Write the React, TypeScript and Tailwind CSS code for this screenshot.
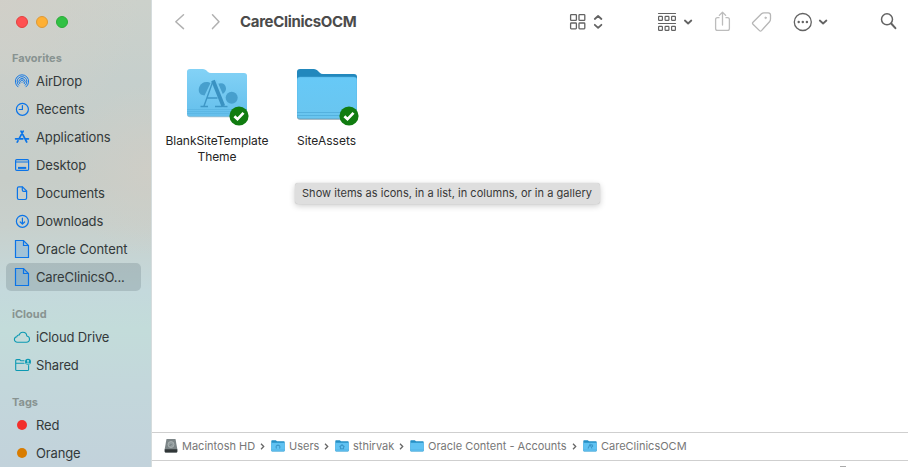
import type { ReactNode } from "react";

const FONT = "font-['Inter','Liberation_Sans',sans-serif]";

function Heading({ children }: { children: ReactNode }) {
  return <h2 className="h-8 pt-[14px] pl-3 text-[11px] leading-[18px] font-bold text-[#889391]">{children}</h2>;
}

function Item({ icon, label, track, active }: { icon: ReactNode; label: string; track: string; active?: boolean }) {
  return (
    <div className={`mr-[10px] ml-1.5 flex h-7 items-center rounded-[5px] ${active ? "bg-[#6c8287]/30" : ""}`}>
      <span className="flex w-8 justify-center">{icon}</span>
      <span className={`-ml-0.5 text-[13px] leading-5 whitespace-nowrap text-[#33393a] ${track}`}>{label}</span>
    </div>
  );
}

const blue = { fill: "none", stroke: "#0b74e8", strokeWidth: 1.2, strokeLinecap: "round", strokeLinejoin: "round" } as const;
const teal = { ...blue, stroke: "#0c99b2", strokeWidth: 1.1 } as const;

function PageIcon() {
  return (
    <svg width="16" height="20" viewBox="0 0 16 20" {...blue} strokeLinecap="butt" strokeLinejoin="miter">
      <path d="M1.500 1.500h8l5 5v12h-13z" fill="#4f9be0" fillOpacity=".3" />
      <path d="M9.500 1.500v5h5" />
    </svg>
  );
}

const airdrop = (
  <svg width="16" height="16" viewBox="0 0 16 16" {...blue} strokeWidth={0.95}>
    <path d="M4 13.900a6.700 6.700 0 1 1 8 0M4.700 12.200a4.900 4.900 0 1 1 6.600 0M5.700 10.700a3.100 3.100 0 1 1 4.600 0" />
    <path d="M6.900 9.300a1.400 1.400 0 1 1 2.200 0" />
  </svg>
);
const recents = (
  <svg width="16" height="16" viewBox="0 0 16 16" {...blue}>
    <circle cx="8.400" cy="8.300" r="6" />
    <path d="M8.400 4.500v4H5.200" />
  </svg>
);
const apps = (
  <svg width="16" height="16" viewBox="0 0 16 16" {...blue} strokeWidth={1.7}>
    <path d="M7 2.200 12.700 13M9.200 2.200 5.400 9.200M4 11.800l-.8 1.300M1.600 9.800h7.200M11.600 9.800h2.800" />
  </svg>
);
const desktop = (
  <svg width="16" height="16" viewBox="0 0 16 16" {...blue}>
    <rect x="1.600" y="2.600" width="13" height="10.800" rx="1.200" />
    <path d="M2 5h12.200" />
    <path d="M4 10.900h8.200" strokeWidth="2" strokeLinecap="butt" />
  </svg>
);
const documents = (
  <svg width="16" height="16" viewBox="0 0 16 16" {...blue}>
    <path d="M4.800 1.800h3.700l4.100 4.200v7.100q0 1.400-1.400 1.400H4.800q-1.400 0-1.400-1.400v-9.900q0-1.400 1.400-1.400z" />
    <path d="M8.300 2v3q0 1.300 1.300 1.300h3" />
  </svg>
);
const downloads = (
  <svg width="16" height="16" viewBox="0 0 16 16" {...blue}>
    <circle cx="8.400" cy="8.300" r="6" />
    <path d="M8.400 5v6M6.200 9l2.200 2.200L10.600 9" />
  </svg>
);
const cloud = (
  <svg width="18" height="16" viewBox="0 0 18 16" {...teal}>
    <path d="M4.400 13.200C2.600 13.200 1.400 12 1.400 10.500c0-1.400 1-2.500 2.400-2.700.2-1.300 1.200-2 2.300-1.700C6.800 4.300 8.100 3.300 9.800 3.300c2.100 0 3.800 1.500 4 3.700 1.600.3 2.700 1.400 2.700 3 0 1.800-1.400 3.200-3.200 3.200z" />
  </svg>
);
const shared = (
  <svg width="18" height="16" viewBox="0 0 18 16" {...teal} className="ml-0.5">
    <path d="M10 3.800H7L5.800 2.600H2.700q-1 0-1 1v8.800q0 1.100 1.100 1.100h10.700q1.100 0 1.100-1.100V8.500M1.700 6.200H10" />
    <circle cx="14" cy="4.800" r="3" fill="#0c99b2" stroke="none" />
    <circle cx="14" cy="3.900" r=".9" fill="#d8eeee" stroke="none" />
    <path d="M12.800 6.300q1.200-1 2.400 0" stroke="#d8eeee" strokeWidth=".9" />
  </svg>
);

function Dot({ color }: { color: string }) {
  return <span className={`size-[10px] rounded-full ${color}`} />;
}

function Check() {
  return (
    <svg width="20" height="20" viewBox="0 0 20 20" className="absolute top-[41px] left-[42px]">
      <circle cx="10" cy="10" r="9.600" fill="#107c10" />
      <path d="m5.400 10.200 3.100 3L14.500 6.900" fill="none" stroke="#fff" strokeWidth="2.700" />
    </svg>
  );
}

function ThemeFolder() {
  return (
    <svg width="60" height="60" viewBox="0 0 60 60" className="block">
      <defs>
        <linearGradient id="tf" x1="0" y1="0" x2="0" y2="1">
          <stop offset="0" stopColor="#83d2f6" />
          <stop offset="1" stopColor="#64bfec" />
        </linearGradient>
      </defs>
      <path d="M0 49.300V8q0-3 3-3h13q2 0 3.500 1.500L21 8q1 1 3 1h33q3 0 3 3v37.300q0 3-3 3H3q-3 0-3-3z" fill="#a9bfca" />
      <path d="M0 48.600V7q0-3 3-3h13q2 0 3.500 1.500L21 7q1 1 3 1h33q3 0 3 3v37.600q0 3-3 3H3q-3 0-3-3z" fill="url(#tf)" />
      <path d="M0 44.500h60M0 46.500h60M0 48.500h60" stroke="#55b0dd" strokeWidth=".6" />
      <g fill="#479fcd">
        <path d="M12 27a8 8 0 0 1 9-10l2.500 1-6 12.500q-4.500-.5-5.500-3.500z" />
        <path d="M31 18.800q7-2 8 4.500 0 4-4 6z" />
        <circle cx="44.700" cy="32.700" r="6" />
      </g>
      <path d="m26.500 16 11.500 26" stroke="#76c9f1" strokeWidth="6.500" />
      <path d="M13.500 41.500h7.500M28 41.500h12.500M17 41 26 16M20.500 33h10" fill="none" stroke="#3f97c6" strokeWidth="1.400" />
      <path d="m26 15.500 10.300 25.500" stroke="#3a92c2" strokeWidth="3.800" />
    </svg>
  );
}

function AssetsFolder() {
  return (
    <svg width="60" height="60" viewBox="0 0 60 60" className="block">
      <defs>
        <linearGradient id="af" x1="0" y1="0" x2="0" y2="1">
          <stop offset="0" stopColor="#67c9f7" />
          <stop offset="1" stopColor="#69c5ef" />
        </linearGradient>
      </defs>
      <path d="M0 51.500V8q0-3 3-3h14q2 0 3.500 1.500l2 2Q24 10 26 10h31q3 0 3 3v38.500q0 3.300-3 3.300H3q-3 0-3-3.300z" fill="#8ba4b1" />
      <path d="M0 40V7q0-3 3-3h14q2 0 3.500 1.500l2 2Q24 9 26 9h31q3 0 3 3v28z" fill="#2288bd" />
      <path d="M0 50.500V15q0-3 3-3h54q3 0 3 3v35.500q0 3-3 3H3q-3 0-3-3z" fill="url(#af)" stroke="#51afdd" strokeWidth=".5" />
      <path d="M0 47.500h60M0 50.500h60" stroke="#4ca8d5" strokeWidth=".7" />
    </svg>
  );
}

function File({ icon, children }: { icon: ReactNode; children: ReactNode }) {
  return (
    <div className="flex w-[110px] flex-col items-center">
      <div className="relative">
        {icon}
        <Check />
      </div>
      <div className="mt-[9px] text-center text-[12px] leading-4 whitespace-nowrap text-[#252525]">{children}</div>
    </div>
  );
}

function MiniFolder({ mark }: { mark?: ReactNode }) {
  return (
    <svg width="14" height="14" viewBox="0 0 14 14" className="shrink-0">
      <path d="M.3 11.500V2q0-.8.8-.8h3.700L6 2.300h6.900q.8 0 .8.800v8.400q0 1-.8 1H1.100q-.8 0-.8-1z" fill="#258fc5" />
      <path d="M.3 3.700h13.400v7.600q0 .9-.8.9H1.100q-.8 0-.8-.9z" fill="#60c2f2" />
      <path d="M.3 11h13.400" stroke="#4dacdc" strokeWidth=".6" />
      {mark}
    </svg>
  );
}

const mini = { fill: "none", stroke: "#3d98ca", strokeWidth: 1.1 } as const;

function Crumb({ icon, label, width, last, track }: { icon: ReactNode; label: string; width: string; last?: boolean; track: string }) {
  return (
    <div className={`flex shrink-0 items-center ${width}`}>
      {icon}
      <span className={`ml-1 text-[11px] leading-4 whitespace-nowrap text-[#777] ${track}`}>{label}</span>
      {!last && (
        <svg width="5" height="8" viewBox="0 0 5 8" className="mr-[6px] ml-auto" fill="none" stroke="#666" strokeWidth="1.300">
          <path d="m1 1.800 2.700 2.700L1 7.200" />
        </svg>
      )}
    </div>
  );
}

const tool = { fill: "none", stroke: "#636363", strokeWidth: 1.3, strokeLinecap: "round", strokeLinejoin: "round" } as const;

export default function App() {
  return (
    <div className={`flex h-[467px] w-[908px] overflow-hidden bg-white ${FONT}`}>
      <aside className="w-[152px] shrink-0 border-r border-[#d5dcdd] bg-[radial-gradient(circle_at_150px_170px,rgba(208,206,198,.8)_0px,rgba(208,206,198,0)_85px),radial-gradient(circle_at_0px_0px,rgba(209,207,200,.9)_0px,rgba(209,207,200,0)_140px),linear-gradient(180deg,#ccd1cb_0px,#c6cfcc_80px,#c7cdc8_180px,#c8d0cc_225px,#c4d9dc_290px,#c3dcda_330px,#c3d7db_385px,#c2d2db_467px)]">
        <div className="flex h-[35px] gap-2 pt-4 pl-4">
          <span className="size-3 rounded-full border border-[#e2413f] bg-[#ff5152]" />
          <span className="size-3 rounded-full border border-[#dd9937] bg-[#ffb035]" />
          <span className="size-3 rounded-full border border-[#2bab38] bg-[#31c144]" />
        </div>
        <Heading>Favorites</Heading>
        <Item icon={airdrop} label="AirDrop" track="tracking-[-0.15px]" />
        <Item icon={recents} label="Recents" track="tracking-[-0.1px]" />
        <Item icon={apps} label="Applications" track="tracking-[-0.1px]" />
        <Item icon={desktop} label="Desktop" track="tracking-[-0.12px]" />
        <Item icon={documents} label="Documents" track="tracking-[-0.12px]" />
        <Item icon={downloads} label="Downloads" track="tracking-[-0.15px]" />
        <Item icon={<PageIcon />} label="Oracle Content" track="tracking-[-0.08px]" />
        <Item icon={<PageIcon />} label="CareClinicsO..." track="tracking-[-0.13px]" active />
        <Heading>iCloud</Heading>
        <Item icon={cloud} label="iCloud Drive" track="tracking-[-0.16px]" />
        <Item icon={shared} label="Shared" track="tracking-[-0.15px]" />
        <Heading>Tags</Heading>
        <Item icon={<Dot color="bg-[#f22f2c]" />} label="Red" track="tracking-[-0.15px]" />
        <Item icon={<Dot color="bg-[#d97c00]" />} label="Orange" track="tracking-[-0.15px]" />
      </aside>

      <main className="flex min-w-0 flex-1 flex-col">
        <header className="flex h-11 shrink-0 items-center pl-[21px]">
          <svg width="14" height="20" viewBox="173 12 14 20" {...tool} stroke="#b1b1b1" strokeWidth={1.5}><path d="m183.500 14.800-7.700 6.900 7.700 6.900" /></svg>
          <svg width="14" height="20" viewBox="209 12 14 20" {...tool} stroke="#b1b1b1" strokeWidth={1.5} className="ml-[22px]"><path d="m212.500 14.800 6.500 6.900-6.500 6.900" /></svg>
          <h1 className="ml-[17px] w-[328px] text-[15px] leading-5 font-bold tracking-[-0.33px] text-[#4b4b4b]">CareClinicsOCM</h1>
          <svg width="20" height="20" viewBox="568 12 20 20" {...tool}>
            <rect x="570.600" y="14.600" width="5.800" height="5.800" rx=".7" /><rect x="579" y="14.600" width="5.800" height="5.800" rx=".7" />
            <rect x="570.600" y="23" width="5.800" height="5.800" rx=".7" /><rect x="579" y="23" width="5.800" height="5.800" rx=".7" />
          </svg>
          <svg width="12" height="20" viewBox="592 12 12 20" {...tool} strokeWidth={1.8} className="ml-1"><path d="m594.800 19 3.300-3 3.300 3M594.800 24.800l3.300 3 3.300-3" /></svg>
          <svg width="24" height="22" viewBox="655 11 24 22" {...tool} strokeWidth={1.2} className="ml-[51px]">
            <path d="M658.500 13.500h17M658.500 23.500h17" />
            <rect x="658.600" y="16.400" width="3.800" height="4" rx=".6" /><rect x="665.100" y="16.400" width="3.800" height="4" rx=".6" /><rect x="671.600" y="16.400" width="3.800" height="4" rx=".6" />
            <rect x="658.600" y="26.400" width="3.800" height="4" rx=".6" /><rect x="665.100" y="26.400" width="3.800" height="4" rx=".6" /><rect x="671.600" y="26.400" width="3.800" height="4" rx=".6" />
          </svg>
          <svg width="12" height="20" viewBox="682 12 12 20" {...tool} strokeWidth={1.8} className="ml-[3px]"><path d="m684.900 20.500 3.200 3 3.200-3" /></svg>
          <svg width="20" height="22" viewBox="712 11 20 22" {...tool} stroke="#bcbcbc" className="ml-[18px]"><path d="M719 17.700h-1.500q-1.900 0-1.900 1.900v8.900q0 1.900 1.900 1.900h10q1.900 0 1.900-1.900v-8.900q0-1.900-1.900-1.900H726M722.500 25V12.500M719.300 15.400l3.200-3.200 3.200 3.200" /></svg>
          <svg width="24" height="24" viewBox="750 10 24 24" {...tool} stroke="#b6b6b6" className="ml-[18px]"><path d="m753 22.300 8.500-8.500q1-1 2.500-1h4.200q2.300 0 2.300 2.300v4q0 1.500-1 2.600l-8 8.900q-1 1-2 0l-6.500-6.300q-1-1 0-2z" /><circle cx="765.600" cy="17.800" r=".9" fill="#b6b6b6" strokeWidth=".5" /></svg>
          <svg width="22" height="22" viewBox="792 11 22 22" {...tool} className="ml-[18px]"><circle cx="802.800" cy="22" r="8.500" /><g fill="#636363" stroke="none"><circle cx="798.700" cy="22" r="1.200" /><circle cx="802.800" cy="22" r="1.200" /><circle cx="806.900" cy="22" r="1.200" /></g></svg>
          <svg width="12" height="20" viewBox="817 12 12 20" {...tool} strokeWidth={1.8} className="ml-[3px]"><path d="m819.800 20.500 3.300 3 3.300-3" /></svg>
          <svg width="20" height="22" viewBox="878 11 20 22" {...tool} strokeWidth={1.5} className="ml-[49px]"><circle cx="887" cy="19.300" r="5.500" /><path d="m891.200 23.500 4.200 4.700" strokeWidth="2" /></svg>
        </header>

        <section className="flex min-h-0 flex-1 flex-col">
          <div className="flex h-[139px] shrink-0 pt-[21px] pl-[10px]">
            <File icon={<ThemeFolder />}>
              <div className="-mt-px tracking-[-0.04px]">BlankSiteTemplate</div>
              <div className="tracking-[-0.1px]">Theme</div>
            </File>
            <File icon={<AssetsFolder />}>
              <div className="-mt-px pr-px tracking-[0px]">SiteAssets</div>
            </File>
          </div>
          <div className="ml-[143px] flex h-[21px] w-[305px] items-center rounded-[3px] bg-[#dedede] pl-[7px] text-[11px] tracking-[0.035px] whitespace-nowrap text-[#373737] shadow-[0_2px_6px_rgba(0,0,0,.2),0_0_1px_rgba(0,0,0,.25)]">
            Show items as icons, in a list, in columns, or in a gallery
          </div>
        </section>

        <nav className="flex h-[29px] shrink-0 items-center border-y border-[#cfcfcf] pb-px pl-3">
          <Crumb
            width="w-[107px]"
            track="tracking-[0px]"
            label="Macintosh HD"
            icon={
              <svg width="14" height="14" viewBox="0 0 14 14" className="shrink-0">
                <path d="M2.500 0h9l1.800 10v2.500q0 1-1 1H1.700q-1 0-1-1V10z" fill="#7c8587" />
                <path d="M.7 10.300h12.600v2.200q0 1-1 1H1.700q-1 0-1-1z" fill="#303638" />
                <circle cx="7" cy="5.500" r="3" fill="#929c9e" stroke="#b6bcbc" strokeWidth=".7" /><path d="m5.500 7 2-2" stroke="#6c7678" />
              </svg>
            }
          />
          <Crumb width="w-[64px]" track="tracking-[0px]" label="Users" icon={<MiniFolder mark={<path d="M5.500 9.500q-1.300-3 1.500-3.400 2.800.4 1.500 3.400" {...mini} />} />} />
          <Crumb width="w-[75px]" track="tracking-[0px]" label="sthirvak" icon={<MiniFolder mark={<path d="M4.500 8 7 5.800 9.500 8M5.500 7.800v2h3v-2" {...mini} />} />} />
          <Crumb width="w-[173px]" track="tracking-[0px]" label="Oracle Content - Accounts" icon={<MiniFolder />} />
          <Crumb width="w-[110px]" track="tracking-[0px]" label="CareClinicsOCM" last icon={<MiniFolder mark={<path d="m5 9.500 2-4 2 4M7.500 6q2.500-1 2 2" {...mini} />} />} />
        </nav>
        <footer className="flex h-[6px] shrink-0 items-end pl-[688px]">
          <span className="h-px w-[6px] bg-[#aaa]" />
        </footer>
      </main>
    </div>
  );
}
